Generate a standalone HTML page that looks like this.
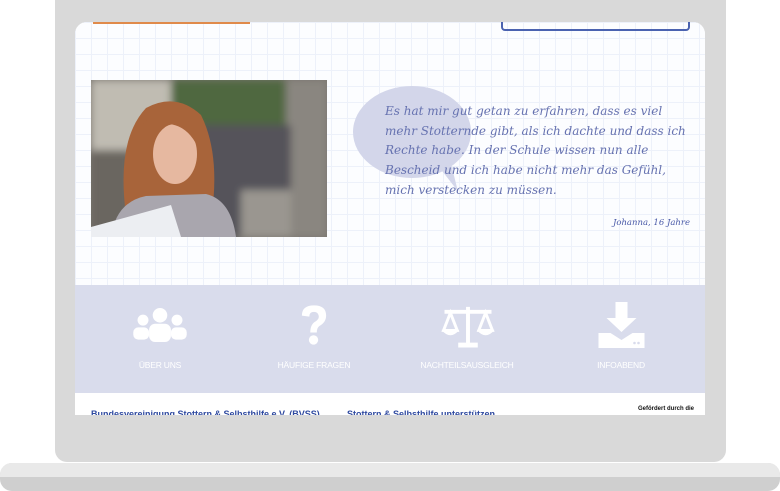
<!DOCTYPE html>
<html><head><meta charset="utf-8"><style>
*{margin:0;padding:0;box-sizing:border-box}
body{width:780px;height:491px;background:#fff;position:relative;overflow:hidden;font-family:"Liberation Sans",sans-serif}
.body{position:absolute;left:55px;top:-20px;width:671px;height:482px;background:#d9d9d9;border-radius:12px}
.base1{position:absolute;left:0;top:463px;width:780px;height:28px;background:#cfcfcf;border-radius:12px}
.base2{position:absolute;left:0;top:463px;width:780px;height:14px;background:#e9e9e9;border-radius:12px 12px 0 0}
.screen{position:absolute;left:75px;top:22px;width:630px;height:393px;background:#fff;border-radius:12px 12px 0 0;overflow:hidden}
.grid{position:absolute;left:0;top:0;width:630px;height:263px;background-color:#fcfdff;
background-image:linear-gradient(#edf1fa 1px,transparent 1px),linear-gradient(90deg,#edf1fa 1px,transparent 1px);background-size:16px 16px}
.orange{position:absolute;left:18px;top:0;width:157px;height:2px;background:#e08a4a}
.bluebox{position:absolute;left:426px;top:-4px;width:189px;height:13px;border:2px solid #4a62b0;border-radius:0 0 4px 4px}
.photo{position:absolute;left:16px;top:58px;width:236px;height:157px;overflow:hidden}
.bubble{position:absolute;left:278px;top:64px;width:118px;height:92px;background:#d3d6ea;border-radius:50%}
.tail{position:absolute;left:360px;top:120px;width:0;height:0;border-left:12px solid transparent;border-right:10px solid transparent;border-top:52px solid #d3d6ea;transform:rotate(-25deg)}
.quote{position:absolute;left:310px;top:80px;white-space:nowrap;font-family:"DejaVu Serif",serif;font-style:italic;color:#6672b0;font-size:12px;line-height:19.7px;letter-spacing:0}
.who{position:absolute;right:15px;top:196px;font-family:"DejaVu Serif",serif;font-style:italic;color:#4a5aa8;font-size:8.5px}
.band{position:absolute;left:0;top:263px;width:630px;height:108px;background:#d9dcec}
.item{position:absolute;top:0;width:154px;text-align:center}
.item svg{position:absolute}
.lbl{position:absolute;top:75px;width:154px;text-align:center;color:#fff;font-size:8.5px;letter-spacing:-.2px}
.foot{position:absolute;left:0;top:371px;width:630px;height:30px;background:#fff}
.f1{position:absolute;left:16px;top:16px;color:#2e49a0;font-size:9px;font-weight:bold}
.f2{position:absolute;left:272px;top:16px;color:#2e49a0;font-size:9px;font-weight:bold}
.f3{position:absolute;left:563px;top:13px;color:#111;font-size:6px;font-weight:bold}
</style></head><body>
<div class="body"></div>
<div class="base1"></div><div class="base2"></div>
<div class="screen">
 <div class="grid"></div>
 <div class="orange"></div>
 <div class="bluebox"></div>
 <div class="photo">
  <svg width="236" height="157" viewBox="0 0 236 157">
   <defs><filter id="b"><feGaussianBlur stdDeviation="4"/></filter></defs>
   <rect width="236" height="157" fill="#7a7670"/>
   <g filter="url(#b)">
   <rect x="0" y="0" width="80" height="70" fill="#c0bcb2"/>
   <rect x="80" y="0" width="120" height="45" fill="#506840"/>
   <rect x="195" y="0" width="41" height="157" fill="#8a8680"/>
   <rect x="110" y="45" width="90" height="112" fill="#55535a"/>
   <rect x="0" y="70" width="40" height="87" fill="#6a6660"/>
   <rect x="150" y="110" width="50" height="47" fill="#9a9690"/>
   </g>
   <path d="M35 135 Q25 60 55 28 Q85 12 110 35 Q130 75 120 140 Z" fill="#a8643a"/>
   <ellipse cx="84" cy="74" rx="22" ry="30" fill="#e6b8a0"/>
   <path d="M20 157 Q25 122 55 116 L115 114 Q140 120 145 157 Z" fill="#a9a6ae"/>
   <path d="M45 62 Q52 30 82 30 Q104 38 108 70 Q98 46 78 44 Q60 48 55 82 Z" fill="#a8643a"/>
   <path d="M0 147 L80 125 L90 157 L0 157 Z" fill="#eceef2"/>
  </svg>
 </div>
 <div class="bubble"></div><div class="tail"></div>
 <div class="quote">Es hat mir gut getan zu erfahren, dass es viel<br>mehr Stotternde gibt, als ich dachte und dass ich<br>Rechte habe. In der Schule wissen nun alle<br>Bescheid und ich habe nicht mehr das Gefühl,<br>mich verstecken zu müssen.</div>
 <div class="who">Johanna, 16 Jahre</div>
 <div class="band">
  <div class="item" style="left:8px">
   <svg style="left:49px;top:23px" width="56" height="34" viewBox="0 0 46 28" fill="#fff">
    <circle cx="23" cy="6" r="6"/><circle cx="9" cy="10" r="4.5"/><circle cx="37" cy="10" r="4.5"/>
    <rect x="14" y="13" width="18" height="15" rx="5"/><rect x="1" y="16" width="13" height="10" rx="4"/><rect x="32" y="16" width="13" height="10" rx="4"/>
   </svg>
   <div class="lbl">ÜBER UNS</div>
  </div>
  <div class="item" style="left:162px">
   <svg style="left:63px;top:17px" width="28" height="46" viewBox="0 0 30 44" fill="#fff">
    <path d="M2 12 Q2 1 15 1 Q28 1 28 12 Q28 19 21 23 Q18 25 18 30 L11 30 Q11 21 17 18 Q21 15 20 12 Q19 8 15 8 Q10 8 10 13 Z"/><circle cx="14.5" cy="38" r="5"/>
   </svg>
   <div class="lbl">HÄUFIGE FRAGEN</div>
  </div>
  <div class="item" style="left:315px">
   <svg style="left:49px;top:19px" width="58" height="45" viewBox="0 0 56 46" fill="none" stroke="#fff">
    <path d="M28 3 V40 M4 8 H52" stroke-width="4"/><path d="M18 42 H38" stroke-width="5"/>
    <path d="M10 9 L3 27 H17 Z M46 9 L39 27 H53 Z" stroke-width="3"/>
    <path d="M2 27 Q10 36 18 27 Z M38 27 Q46 36 54 27 Z" fill="#fff" stroke-width="1"/>
   </svg>
   <div class="lbl">NACHTEILSAUSGLEICH</div>
  </div>
  <div class="item" style="left:469px">
   <svg style="left:54px;top:17px" width="47" height="46" viewBox="0 0 46 46" fill="#fff">
    <path d="M17 0 H29 V16 H38 L23 30 L8 16 H17 Z"/>
    <path d="M0 31 H12 L23 38 L34 31 H46 V46 H0 Z"/>
    <circle cx="36" cy="41" r="1.3" fill="#d9dcec"/><circle cx="40" cy="41" r="1.3" fill="#d9dcec"/>
   </svg>
   <div class="lbl">INFOABEND</div>
  </div>
 </div>
 <div class="foot">
  <div class="f1">Bundesvereinigung Stottern &amp; Selbsthilfe e.V. (BVSS)</div>
  <div class="f2">Stottern &amp; Selbsthilfe unterstützen</div>
  <div class="f3">Gefördert durch die</div>
 </div>
</div>
</body></html>
